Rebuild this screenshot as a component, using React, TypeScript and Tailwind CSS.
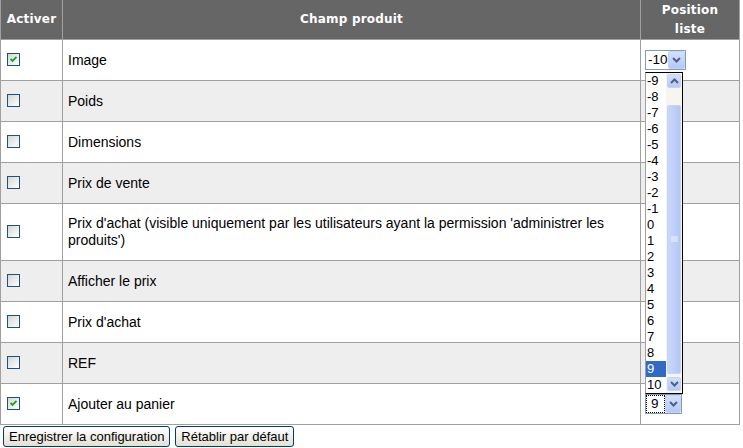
import React from "react";

type Row = { label: string; checked: boolean; gray: boolean; tall?: boolean; select?: "top" | "bottom" };

const rows: Row[] = [
  { label: "Image", checked: true, gray: false, select: "top" },
  { label: "Poids", checked: false, gray: true },
  { label: "Dimensions", checked: false, gray: false },
  { label: "Prix de vente", checked: false, gray: true },
  {
    label: "Prix d'achat (visible uniquement par les utilisateurs ayant la permission 'administrer les produits')",
    checked: false,
    gray: false,
    tall: true,
  },
  { label: "Afficher le prix", checked: false, gray: true },
  { label: "Prix d'achat", checked: false, gray: false },
  { label: "REF", checked: false, gray: true },
  { label: "Ajouter au panier", checked: true, gray: false, select: "bottom" },
];

function Check({ checked }: { checked: boolean }) {
  return (
    <span className="inline-flex w-[13px] h-[13px] mb-[2px] border border-[#1c5180] bg-linear-to-br from-[#d6d6d0] to-white items-center justify-center">
      {checked && (
        <svg width="7" height="7" viewBox="0 0 7 7">
          <path d="M0.5 3 L2.5 5 L6.5 1" fill="none" stroke="#21a121" strokeWidth="1.9" />
        </svg>
      )}
    </span>
  );
}

function Chevron({ up = false }: { up?: boolean }) {
  return (
    <svg width="9" height="6" viewBox="0 0 9 6">
      <path
        d={up ? "M1 5 L4.5 1.5 L8 5" : "M1 1 L4.5 4.5 L8 1"}
        fill="none"
        stroke="#4d6185"
        strokeWidth="2"
      />
    </svg>
  );
}

function ArrowBtn({ up = false, w = "w-[17px]" }: { up?: boolean; w?: string }) {
  return (
    <span
      className={`${w} h-full flex items-center justify-center rounded-[2px] border border-[#c3d3fd] bg-linear-to-b from-[#d3e0fd] to-[#b5c9f6]`}
    >
      <Chevron up={up} />
    </span>
  );
}

function TopSelect() {
  return (
    <div className="w-[41px] h-[20px] border border-[#7f9db9] bg-white flex text-[13.5px]">
      <span className="flex-1 pl-[2px] leading-[18px]">-10</span>
      <ArrowBtn />
    </div>
  );
}

function BottomSelect() {
  return (
    <div className="w-[37px] h-[20px] border border-[#7f9db9] bg-white flex text-[13.5px]">
      <span className="w-[19px] h-full border border-dotted border-black pl-[4px] leading-[16px]">9</span>
      <ArrowBtn w="w-[16px]" />
    </div>
  );
}

const options = Array.from({ length: 20 }, (_, i) => i - 9);

function Dropdown() {
  return (
    <div className="absolute left-[645px] top-[72px] w-[38px] h-[322px] border border-black border-l-[#a0a0a0] bg-white flex text-[13px]">
      <div className="w-[20px] flex flex-col">
        {options.map((o) => (
          <div
            key={o}
            className={`h-[16px] leading-[16px] pl-[1px] ${o === 9 ? "bg-[#316ac5] text-white" : ""}`}
          >
            {o}
          </div>
        ))}
      </div>
      <div className="w-[16px] flex flex-col bg-[#f6f5f0]">
        <div className="h-[16px] p-[1px] flex">
          <ArrowBtn up w="w-[15px]" />
        </div>
        <div className="h-[16px]" />
        <div className="h-[269px] px-[1px] flex">
          <div className="w-[14px] h-full rounded-[2px] border border-[#c3d3fd] bg-linear-to-r from-[#c9d8fc] to-[#b3c7f5] flex items-center justify-center">
            <svg width="7" height="7" viewBox="0 0 7 7">
              <path d="M0 1 H7 M0 3 H7 M0 5 H7" stroke="#eef3fe" strokeWidth="1" />
            </svg>
          </div>
        </div>
        <div className="h-[2px]" />
        <div className="h-[16px] p-[1px] flex">
          <ArrowBtn w="w-[15px]" />
        </div>
      </div>
    </div>
  );
}

export default function App() {
  return (
    <div className="relative w-[743px] h-[448px] bg-white text-black text-[13px] font-['Liberation_Sans',Arial,sans-serif]">
      <div className="w-[740px] border-x border-[#a0a0a0]">
        <div className="flex h-[40px] bg-[#666666] border-b border-[#a0a0a0] text-white font-bold text-[12px] tracking-[0.2px] leading-[19px] font-['DejaVu_Sans',Verdana,sans-serif]">
          <div className="w-[62px] border-r border-[#a0a0a0] flex items-center justify-center">Activer</div>
          <div className="w-[578px] border-r border-[#a0a0a0] flex items-center justify-center">Champ produit</div>
          <div className="flex-1 flex items-center justify-center text-center">
            Position
            <br />
            liste
          </div>
        </div>
        {rows.map((r, i) => (
          <div
            key={i}
            className={`flex border-b border-[#a0a0a0] ${r.tall ? "h-[57px]" : "h-[41px]"} ${r.gray ? "bg-[#eeeeee]" : "bg-white"}`}
          >
            <div className="w-[62px] border-r border-[#a0a0a0] flex items-center pl-[6px]">
              <Check checked={r.checked} />
            </div>
            <div className="w-[578px] border-r border-[#a0a0a0] flex items-center px-[5px] text-[14px] leading-[17px]">
              <span>{r.label}</span>
            </div>
            <div className="flex-1 flex items-center pl-[4px]">
              {r.select === "top" && <TopSelect />}
              {r.select === "bottom" && <BottomSelect />}
            </div>
          </div>
        ))}
      </div>
      <div className="flex gap-[5px] ml-[3px] mt-[1px]">
        <button className="h-[21px] px-[5px] border border-[#003c74] rounded-[3px] bg-linear-to-b from-white to-[#e3e0d3] leading-[19px]">
          Enregistrer la configuration
        </button>
        <button className="h-[21px] px-[5px] border border-[#003c74] rounded-[3px] bg-linear-to-b from-white to-[#e3e0d3] leading-[19px]">
          Rétablir par défaut
        </button>
      </div>
      <Dropdown />
    </div>
  );
}
